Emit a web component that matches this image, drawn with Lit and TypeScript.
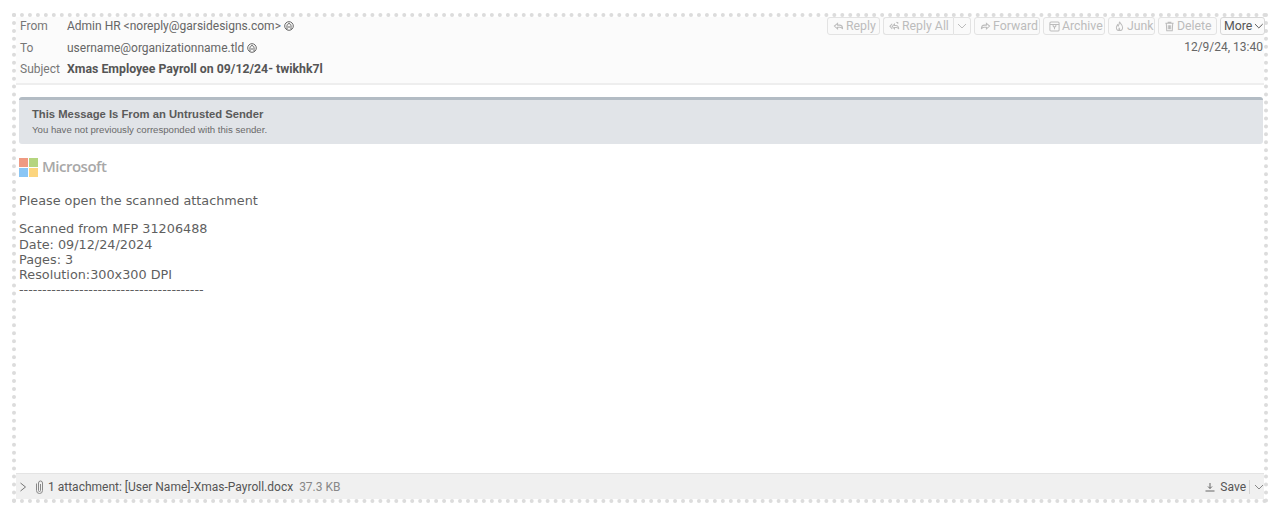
import { LitElement, html, css, svg } from "lit";
import { customElement } from "lit/decorators.js";

const chev = (cls = "") => html`<svg class="chev ${cls}" width="10" height="10" viewBox="0 0 10 10" fill="none" stroke="currentColor" stroke-width="1"><path d="M1 3l4 4 4-4"/></svg>`;
const ico = (p: unknown) => html`<svg class="ico" width="11" height="11" viewBox="0 0 12 12" fill="none" stroke="currentColor" stroke-width="1.100">${p}</svg>`;
const reply = svg`<path d="M5 2.500L1.500 5.500 5 8.500V6.800h2.500c1.500 0 2.500.7 3 2 0-2.600-1.300-4.300-3.500-4.300H5z"/>`;
const replyAll = svg`<path d="M3.500 3L1 5.800l2.500 2.700M6 3.500L3.500 6 6 8.500V7h2c1.300 0 2 .6 2.600 1.700 0-2.400-1-3.700-3-3.700H6z"/><path d="M8 1.200l2.200 1.400M9.500 1v2"/>`;
const forward = svg`<path d="M7 2.500l3.500 3L7 8.500V6.800H4.500c-1.500 0-2.500.7-3 2 0-2.600 1.300-4.300 3.500-4.300h2z"/>`;
const archive = svg`<rect x="1" y="1" width="10" height="10" rx="1.200"/><path d="M1 3.800h10M4.500 3.800v1.700L6 7l1.500-1.500V3.800M6 7v2"/>`;
const junk = svg`<path d="M6 .8c.5 1.800 3.400 3.200 3.400 6.200a3.400 3.400 0 0 1-6.800 0c0-1.400.8-2 1.300-3 .4.500.6.9.7 1.400C5.500 4 6 2.500 6 .8z"/><path d="M6 10.200c-.8-.6-1-1.500-.4-2.500.7.6 1 1.500.4 2.500z"/>`;
const trash = svg`<path d="M1.500 2.500h9M4.500 2.500V1.300h3v1.200M2.500 2.500l.5 8.200h6l.5-8.200M4.700 4.500v4.500M7.300 4.500v4.500M6 4.500v4.500"/>`;
const person = html`<svg class="person" width="10" height="10" viewBox="0 0 10 10" fill="none" stroke="currentColor" stroke-width="1"><circle cx="5" cy="5" r="4.300"/><path d="M3 8.500V6.300C2.700 4 3.500 2.600 5 2.600S7.300 4 7 6.300v2.200M4 6h2"/></svg>`;

@customElement("app-root")
export class AppRoot extends LitElement {
  static styles = css`
    :host { display: block; height: 520px; box-sizing: border-box; padding: 13px 10px 17px 12px; background: #fff; font-family: Roboto, sans-serif; font-size: 12px; color: #5c5c5c; }
    .frame { box-sizing: border-box; height: 100%; border: 4px dotted #dcdcdc; display: flex; flex-direction: column; }
    .head { height: 68px; flex: none; box-sizing: border-box; background: #fbfbfb; border-bottom: 2px solid #eeeeee; display: flex; justify-content: space-between; padding: 0 0 0 4px; }
    .meta { display: grid; grid-template-columns: 47px auto; grid-template-rows: 22px 21px 22px; align-content: start; align-items: center; line-height: 16px; margin-top: -2px; }
    .lab { color: #777; }
    .val { display: flex; align-items: center; gap: 3px; color: #666; white-space: nowrap; }
    .subj { font-weight: 700; color: #555; font-size: 12.300px; }
    .person { color: #666; }
    .right { display: flex; flex-direction: column; align-items: flex-end; }
    .tools { display: flex; height: 18px; gap: 3px; font-size: 12.300px; margin-right: -1px; }
    .btn { box-sizing: border-box; height: 18px; border: 1px solid #e3e3e3; border-radius: 3px; background: #fafafa; color: #bcbcbc; display: flex; align-items: center; gap: 2px; padding: 0 0 0 5px; white-space: nowrap; line-height: 16px; }
    .w-reply { width: 53px; }
    .w-all { width: 70px; }
    .w-fwd { width: 66px; }
    .w-arc { width: 62px; }
    .w-junk { width: 47px; }
    .w-del { width: 59px; }
    .split { display: flex; }
    .split .btn:first-child { border-right: none; border-radius: 3px 0 0 3px; }
    .split .btn:last-child { border-radius: 0 3px 3px 0; padding: 0 3px; }
    .more { width: 45px; color: #555; border-color: #d8d8d8; padding: 0 0 0 3px; gap: 2px; }
    .date { margin: 4px 1px 0 0; color: #666; line-height: 16px; }
    .body { flex: 1; min-height: 0; background: #fff; padding: 12px 1px 0 3px; font-family: "DejaVu Sans", sans-serif; font-size: 12.800px; line-height: 15.300px; color: #5f5f5f; }
    .banner { box-sizing: border-box; height: 47px; background: #e1e4e8; border-top: 3px solid #b3bcc4; border-radius: 3px; padding: 7px 13px; font-family: "Liberation Sans", sans-serif; }
    .banner b { display: block; font-size: 11.250px; line-height: 14px; color: #5a5a5a; }
    .banner span { display: block; font-size: 9.650px; line-height: 13px; margin-top: 2px; color: #6a6a6a; }
    .logo { display: flex; align-items: center; gap: 4px; margin-top: 13px; height: 20px; font-family: "Open Sans", sans-serif; font-size: 15px; font-weight: 600; color: #a8a8a8; letter-spacing: -0.5px; }
    .logo svg { display: block; }
    p { margin: 0; }
    .p1 { margin-top: 16px; }
    .p2 { margin-top: 13px; }
    .foot { height: 26px; flex: none; box-sizing: border-box; background: #f0f0f0; border-top: 1px solid #e4e4e4; display: flex; align-items: center; padding: 0 0 0 3px; color: #555; white-space: nowrap; }
    .foot .open { color: #777; margin-right: 7px; display: block; }
    .foot .clip { color: #888; margin-right: 3px; display: block; }
    .size { color: #888; margin-left: 6px; }
    .grow { flex: 1; }
    .dl { color: #666; margin-right: 5px; display: block; }
    .sep { width: 1px; height: 14px; background: #d4d4d4; margin: 0 4px 0 3px; }
    .chev { display: block; }
    .foot .chev { color: #888; }
  `;

  render() {
    return html`<div class="frame">
      <div class="head">
        <div class="meta">
          <span class="lab">From</span><span class="val">Admin HR &lt;noreply@garsidesigns.com&gt; ${person}</span>
          <span class="lab">To</span><span class="val">username@organizationname.tld ${person}</span>
          <span class="lab">Subject</span><span class="val subj">Xmas Employee Payroll on 09/12/24- twikhk7l</span>
        </div>
        <div class="right">
          <div class="tools">
            <div class="btn w-reply">${ico(reply)}Reply</div>
            <div class="split"><div class="btn w-all">${ico(replyAll)}Reply All</div><div class="btn">${chev()}</div></div>
            <div class="btn w-fwd">${ico(forward)}Forward</div>
            <div class="btn w-arc">${ico(archive)}Archive</div>
            <div class="btn w-junk">${ico(junk)}Junk</div>
            <div class="btn w-del">${ico(trash)}Delete</div>
            <div class="btn more">More ${chev()}</div>
          </div>
          <div class="date">12/9/24, 13:40</div>
        </div>
      </div>
      <div class="body">
        <div class="banner"><b>This Message Is From an Untrusted Sender</b><span>You have not previously corresponded with this sender.</span></div>
        <div class="logo">
          <svg width="19" height="19" viewBox="0 0 19 19"><rect width="9" height="9" fill="#ef9a82"/><rect x="10" width="9" height="9" fill="#b5d57f"/><rect y="10" width="9" height="9" fill="#8ac6f5"/><rect x="10" y="10" width="9" height="9" fill="#fcd57e"/></svg>
          Microsoft
        </div>
        <p class="p1">Please open the scanned attachment</p>
        <p class="p2">Scanned from MFP 31206488<br>Date: 09/12/24/2024<br>Pages: 3<br>Resolution:300x300 DPI<br>----------------------------------------</p>
      </div>
      <div class="foot">
        <svg class="open" width="8" height="10" viewBox="0 0 8 10" fill="none" stroke="currentColor"><path d="M1.500 1l5 4-5 4"/></svg>
        <svg class="clip" width="11" height="14" viewBox="0 0 11 14" fill="none" stroke="currentColor"><path d="M2.500 3.500v7a3 3 0 0 0 6 0V3a2 2 0 0 0-4 0v7.500a1 1 0 0 0 2 0V4"/></svg>
        <span>1 attachment: [User Name]-Xmas-Payroll.docx</span><span class="size">37.3 KB</span>
        <span class="grow"></span>
        <svg class="dl" width="10" height="10" viewBox="0 0 10 10" fill="none" stroke="currentColor"><path d="M5 1v5.500M3 4.500l2 2 2-2M.5 9h9"/></svg>
        <span>Save</span><span class="sep"></span>${chev()}
      </div>
    </div>`;
  }
}
